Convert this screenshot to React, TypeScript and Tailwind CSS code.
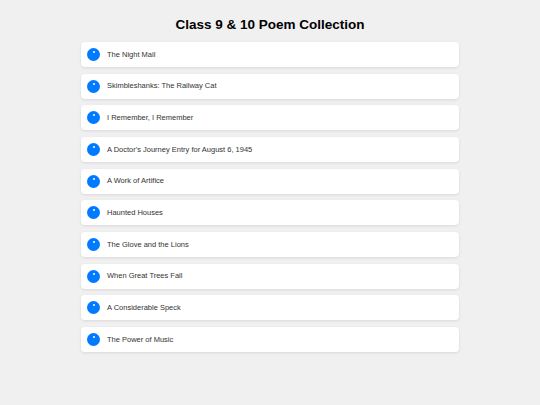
const POEMS = [
  "The Night Mail",
  "Skimbleshanks: The Railway Cat",
  "I Remember, I Remember",
  "A Doctor's Journey Entry for August 6, 1945",
  "A Work of Artifice",
  "Haunted Houses",
  "The Glove and the Lions",
  "When Great Trees Fall",
  "A Considerable Speck",
  "The Power of Music",
];

export default function App() {
  return (
    <div
      className="min-h-[405px] w-full bg-[#f0f0f0] pt-[15px]"
      style={{ fontFamily: '"Liberation Sans", Arial, sans-serif' }}
    >
      <h1 className="text-center text-[13.5px] font-bold leading-[20px] text-black">
        Class 9 &amp; 10 Poem Collection
      </h1>
      <ul className="mx-auto mt-[7px] flex w-[378px] flex-col gap-[6.67px]">
        {POEMS.map((title) => (
          <li
            key={title}
            className="flex h-[25px] items-center gap-[7px] rounded-[4px] bg-white pl-[6px] shadow-[0_1px_3px_rgba(0,0,0,0.1)]"
          >
            <span className="relative h-[13px] w-[13px] shrink-0 rounded-full bg-[#007bff]">
              <span className="absolute left-[5.5px] top-[3px] h-[2px] w-[2px] rounded-full bg-white" />
            </span>
            <span className="text-[7.5px] leading-none text-[#333]">{title}</span>
          </li>
        ))}
      </ul>
    </div>
  );
}
